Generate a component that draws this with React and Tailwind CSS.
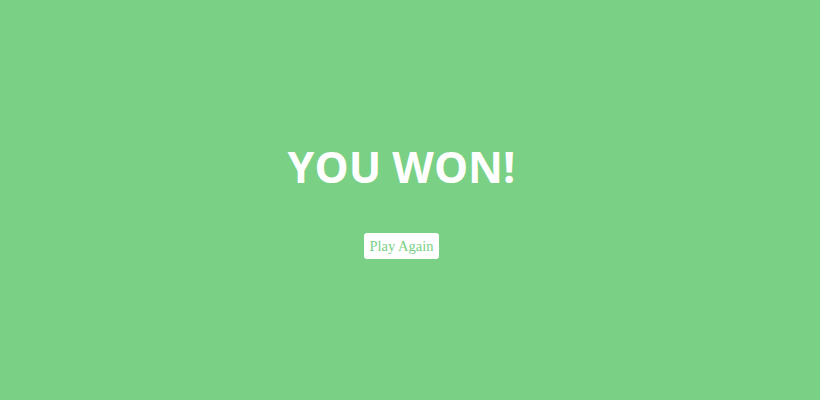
export default function App() {
  return (
    <div className="w-[820px] h-[400px] bg-[#7ad084] flex flex-col items-center pr-[17px] pt-[138px]">
      <h1 className="text-white text-[43px] leading-[58px] font-bold font-['Open_Sans',sans-serif]">
        YOU WON!
      </h1>
      <button className="mt-[37px] bg-white text-[#7ad084] text-[14.5px] leading-[18px] px-[5px] py-[4px] rounded-[3px] font-['Liberation_Serif',serif]">
        Play Again
      </button>
    </div>
  );
}
